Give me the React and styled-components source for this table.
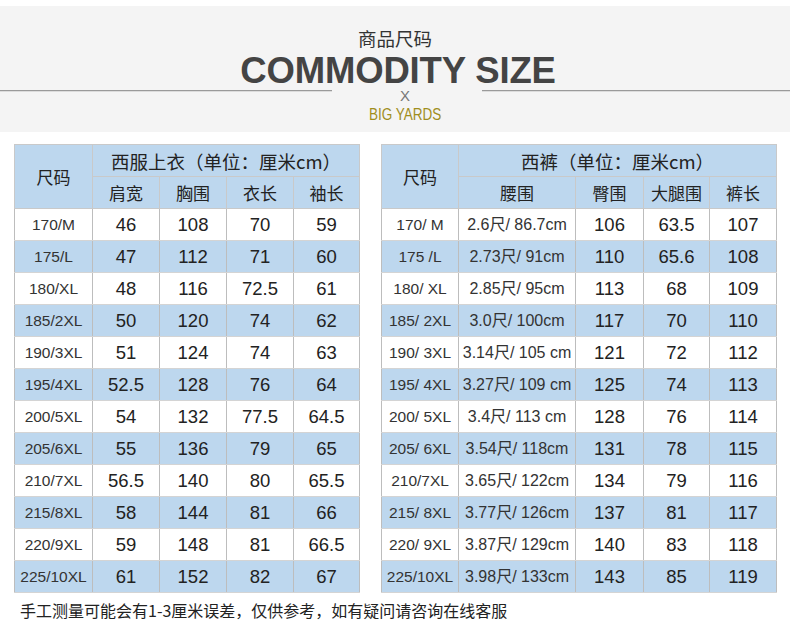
import React from "react";
import styled, { createGlobalStyle } from "styled-components";

const Global = createGlobalStyle`
  html, body { margin: 0; padding: 0; background: #fff; }
  body { font-family: "Liberation Sans", "Noto Sans CJK SC", sans-serif; color: #222; }
`;

const Page = styled.div`
  width: 790px;
  padding-top: 6px;
`;

const Banner = styled.header`
  height: 126px;
  background: #f4f4f4;
  display: flex;
  flex-direction: column;
  align-items: center;
`;

const TitleCn = styled.div`
  margin-top: 21px;
  font-family: "Noto Sans CJK SC", sans-serif;
  font-size: 18.5px;
  line-height: 22px;
  color: #333;
`;

const TitleEn = styled.div`
  margin-top: 4px;
  font-family: "Liberation Sans", Arial, sans-serif;
  font-weight: 700;
  font-size: 36.5px;
  line-height: 36px;
  letter-spacing: -0.15px;
  color: #444;
  transform: translateX(3px);
`;

const DividerRow = styled.div`
  align-self: stretch;
  display: flex;
  align-items: flex-start;
  margin-top: 1px;
`;

const Rule = styled.div`
  height: 1px;
  background: #9a9a9a;
  border-bottom: 1px solid #dcdcdc;
  width: ${(p) => (p.$w ? `${p.$w}px` : "auto")};
  flex: ${(p) => (p.$w ? "none" : "1")};
`;

const Mid = styled.div`
  width: 150px;
  display: flex;
  flex-direction: column;
  align-items: center;
`;

const Cross = styled.div`
  margin-top: 0px;
  font-family: "Liberation Sans", Arial, sans-serif;
  font-size: 15px;
  line-height: 11px;
  color: #777;
  margin-left: -4px;
`;

const Yards = styled.div`
  margin-top: 6px;
  font-family: "Liberation Sans", Arial, sans-serif;
  font-size: 16.5px;
  line-height: 14px;
  color: #a08e1c;
  transform: scaleX(0.82);
  white-space: nowrap;
  margin-left: -4px;
`;

const Tables = styled.div`
  display: flex;
  gap: 21px;
  padding: 0 14px;
  margin-top: 12px;
  align-items: flex-start;
`;

const Table = styled.table`
  border-collapse: collapse;
  table-layout: fixed;
  width: ${(p) => p.$w}px;
  border: 1px solid #c9c9c9;
`;

const Row = styled.tr`
  height: 32px;
  background: ${(p) => (p.$alt ? "#bdd7ee" : "#ffffff")};
`;

const HeadCell = styled.th`
  background: #bdd7ee;
  font-family: "Noto Sans CJK SC", sans-serif;
  font-weight: 400;
  font-size: ${(p) => (p.$big ? "18.5px" : "17px")};
  color: #222;
  text-align: center;
  padding: 0;
  border: 1px solid #c9c9c9;
  line-height: 30px;
  white-space: nowrap;
`;

const Cell = styled.td`
  padding: 0;
  text-align: center;
  border-left: 1px solid #bdbdbd;
  border-right: 1px solid #bdbdbd;
  border-top: 1px solid #d4d4d4;
  border-bottom: 1px solid #d4d4d4;
  font-family: "Liberation Sans", "Noto Sans CJK SC", sans-serif;
  font-size: ${(p) => p.$size};
  color: ${(p) => (p.$size === "18.5px" ? "#222" : "#333")};
  white-space: nowrap;
  line-height: 30px;
`;

const Note = styled.div`
  margin: 6px 0 0 20px;
  font-family: "Noto Sans CJK SC", sans-serif;
  font-size: 16px;
  line-height: 22px;
  color: #222;
`;

const jacket = [
  ["170/M", "46", "108", "70", "59"],
  ["175/L", "47", "112", "71", "60"],
  ["180/XL", "48", "116", "72.5", "61"],
  ["185/2XL", "50", "120", "74", "62"],
  ["190/3XL", "51", "124", "74", "63"],
  ["195/4XL", "52.5", "128", "76", "64"],
  ["200/5XL", "54", "132", "77.5", "64.5"],
  ["205/6XL", "55", "136", "79", "65"],
  ["210/7XL", "56.5", "140", "80", "65.5"],
  ["215/8XL", "58", "144", "81", "66"],
  ["220/9XL", "59", "148", "81", "66.5"],
  ["225/10XL", "61", "152", "82", "67"],
];

const pants = [
  ["170/ M", "2.6尺/ 86.7cm", "106", "63.5", "107"],
  ["175 /L", "2.73尺/ 91cm", "110", "65.6", "108"],
  ["180/ XL", "2.85尺/ 95cm", "113", "68", "109"],
  ["185/ 2XL", "3.0尺/ 100cm", "117", "70", "110"],
  ["190/ 3XL", "3.14尺/ 105 cm", "121", "72", "112"],
  ["195/ 4XL", "3.27尺/ 109 cm", "125", "74", "113"],
  ["200/ 5XL", "3.4尺/ 113 cm", "128", "76", "114"],
  ["205/ 6XL", "3.54尺/ 118cm", "131", "78", "115"],
  ["210/7XL", "3.65尺/ 122cm", "134", "79", "116"],
  ["215/ 8XL", "3.77尺/ 126cm", "137", "81", "117"],
  ["220/ 9XL", "3.87尺/ 129cm", "140", "83", "118"],
  ["225/10XL", "3.98尺/ 133cm", "143", "85", "119"],
];

function SizeTable({ width, cols, title, subs, rows, sizes }) {
  return (
    <Table $w={width}>
      <colgroup>
        {cols.map((c, i) => (
          <col key={i} style={{ width: c }} />
        ))}
      </colgroup>
      <thead>
        <Row $alt>
          <HeadCell rowSpan={2}>尺码</HeadCell>
          <HeadCell colSpan={4} $big>{title}</HeadCell>
        </Row>
        <Row $alt>
          {subs.map((s) => (
            <HeadCell key={s}>{s}</HeadCell>
          ))}
        </Row>
      </thead>
      <tbody>
        {rows.map((r, i) => (
          <Row key={r[0]} $alt={i % 2 === 1}>
            {r.map((v, j) => (
              <Cell key={j} $size={sizes[j] || "18.5px"}>
                {v}
              </Cell>
            ))}
          </Row>
        ))}
      </tbody>
    </Table>
  );
}

export default function App() {
  return (
    <Page>
      <Global />
      <Banner>
        <TitleCn>商品尺码</TitleCn>
        <TitleEn>COMMODITY SIZE</TitleEn>
        <DividerRow>
          <Rule $w={332} />
          <Mid>
            <Cross>X</Cross>
            <Yards>BIG YARDS</Yards>
          </Mid>
          <Rule />
        </DividerRow>
      </Banner>
      <Tables>
        <SizeTable
          width={345}
          cols={[78, 67, 67, 67, 66]}
          title="西服上衣（单位：厘米cm）"
          subs={["肩宽", "胸围", "衣长", "袖长"]}
          rows={jacket}
          sizes={["15.5px"]}
        />
        <SizeTable
          width={395}
          cols={[77, 117, 68, 66, 67]}
          title="西裤（单位：厘米cm）"
          subs={["腰围", "臀围", "大腿围", "裤长"]}
          rows={pants}
          sizes={["15.5px", "16px"]}
        />
      </Tables>
      <Note>手工测量可能会有1-3厘米误差，仅供参考，如有疑问请咨询在线客服</Note>
    </Page>
  );
}
